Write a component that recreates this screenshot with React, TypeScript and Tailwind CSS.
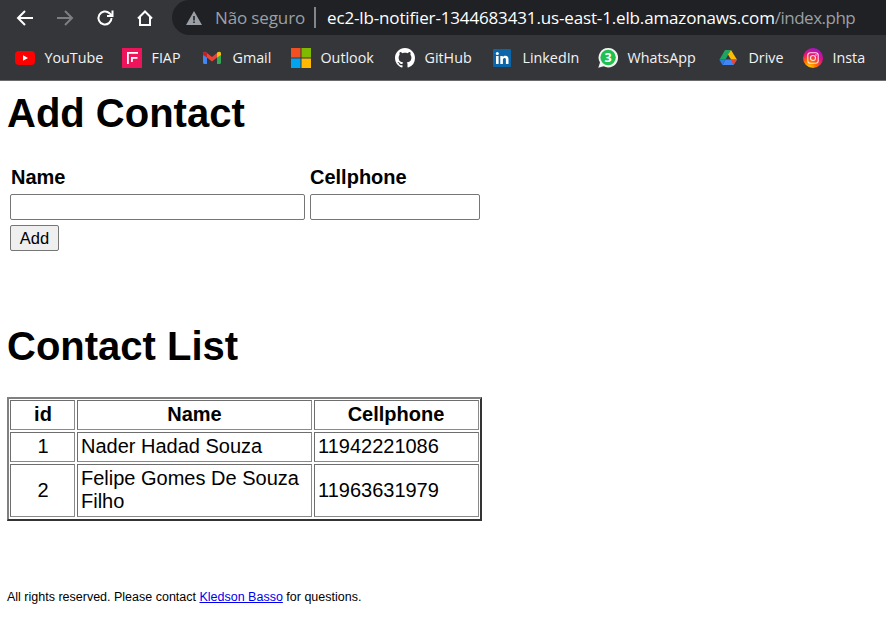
import type { ReactNode } from "react";

const chromeFont = "font-['Open_Sans','Noto_Sans',sans-serif]";

function NavIcon({ children, className }: { children: ReactNode; className?: string }) {
  return (
    <svg width="20" height="20" viewBox="0 0 20 20" fill="none" strokeWidth="2" className={className}>
      {children}
    </svg>
  );
}

function YouTubeIcon() {
  return (
    <svg width="20" height="20" viewBox="0 0 20 20">
      <rect x="0" y="3" width="20" height="14" rx="4" fill="#f00" />
      <path d="M8 7.200 13 10 8 12.800Z" fill="#fff" />
    </svg>
  );
}

function FiapIcon() {
  return (
    <svg width="20" height="20" viewBox="0 0 20 20">
      <rect width="20" height="20" fill="#ed145b" />
      <path d="M5 16V4h11v1.800H6.800V16Z" fill="#fff" />
      <path d="M9 9h6.500v1.800h-4.700V14H9Z" fill="#fff" />
    </svg>
  );
}

function GmailIcon() {
  return (
    <svg width="18" height="20" viewBox="0 0 18 20">
      <path d="M0 5.500C0 3.800 2 3 3.200 4.200L4 5v11H1.200C.5 16 0 15.500 0 14.800Z" fill="#4285f4" />
      <path d="M14 5l.8-.8C16 3 18 3.800 18 5.500v9.300c0 .7-.5 1.200-1.200 1.200H14Z" fill="#34a853" />
      <path d="M4 5l5 4 5-4v4.500l-5 4-5-4Z" fill="#ea4335" />
      <path d="M14 5l.8-.8C16 3 18 3.800 18 5.500V7l-4 2.500Z" fill="#fbbc04" />
      <path d="M0 5.500C0 3.800 2 3 3.200 4.200L4 5v4.500L0 7Z" fill="#c5221f" />
    </svg>
  );
}

function OutlookIcon() {
  return (
    <svg width="20" height="20" viewBox="0 0 20 20">
      <rect width="9.500" height="9.500" fill="#f25022" />
      <rect x="10.500" width="9.500" height="9.500" fill="#7fba00" />
      <rect y="10.500" width="9.500" height="9.500" fill="#00a4ef" />
      <rect x="10.500" y="10.500" width="9.500" height="9.500" fill="#ffb900" />
    </svg>
  );
}

function GitHubIcon() {
  return (
    <svg width="20" height="20" viewBox="0 0 16 16" fill="#fff">
      <path d="M8 0C3.580 0 0 3.580 0 8c0 3.540 2.290 6.530 5.470 7.590.4.070.55-.17.55-.38 0-.19-.01-.82-.01-1.490-2.010.37-2.530-.49-2.690-.94-.09-.23-.48-.94-.82-1.130-.28-.15-.68-.52-.01-.53.63-.01 1.080.58 1.230.82.72 1.210 1.870.87 2.330.66.070-.52.280-.87.510-1.070-1.780-.2-3.640-.89-3.640-3.950 0-.87.310-1.590.820-2.150-.08-.2-.36-1.020.08-2.120 0 0 .67-.21 2.200.82.640-.18 1.320-.27 2-.27s1.360.09 2 .27c1.530-1.040 2.200-.82 2.200-.82.440 1.100.160 1.920.080 2.120.510.560.820 1.270.820 2.150 0 3.070-1.870 3.750-3.650 3.950.290.250.540.730.540 1.480 0 1.070-.01 1.930-.01 2.200 0 .210.150.460.550.380A8.010 8.010 0 0 0 16 8c0-4.420-3.580-8-8-8Z" />
    </svg>
  );
}

function LinkedInIcon() {
  return (
    <svg width="18" height="18" viewBox="0 0 18 18">
      <rect width="18" height="18" rx="1" fill="#0a66a8" />
      <rect x="3" y="7" width="2.600" height="8" fill="#fff" />
      <circle cx="4.300" cy="4.500" r="1.500" fill="#fff" />
      <path d="M7.300 7h2.500v1.200C10.400 7.300 11.300 6.800 12.500 6.800c2.100 0 3 1.300 3 3.500V15h-2.600v-4.200c0-1-.4-1.700-1.300-1.700-1 0-1.700.7-1.700 1.800V15H7.300Z" fill="#fff" />
    </svg>
  );
}

function WhatsAppIcon() {
  return (
    <svg width="20" height="20" viewBox="0 0 20 20">
      <path d="M10 0a9.500 9.500 0 0 0-8 14.500L.3 19.700l5.400-1.500A9.700 9.700 0 1 0 10 0Z" fill="#f2f2f2" />
      <circle cx="10.100" cy="9.500" r="7.700" fill="#1fc04f" />
      <text x="10.100" y="14" textAnchor="middle" fontSize="12.500" fontWeight="700" fill="#fff" fontFamily="'Open Sans', sans-serif">3</text>
    </svg>
  );
}

function DriveIcon() {
  return (
    <svg width="18" height="18" viewBox="0 0 18 18">
      <path d="M6 1h6L6.500 10.500H.5Z" fill="#1ea362" />
      <path d="M12 1l6 9.800h-5.800L9 5.500Z" fill="#fbbc04" />
      <path d="M3.500 16h11l3.500-5.500H6.500Z" fill="#4285f4" />
      <path d="M.2 10.500H6.500L3.500 16Z" fill="#2a7de1" />
      <path d="M12 10.500h6L14.500 16Z" fill="#ea4335" />
    </svg>
  );
}

function InstaIcon() {
  return (
    <svg width="20" height="20" viewBox="0 0 20 20">
      <defs>
        <radialGradient id="insta" cx="0.3" cy="1" r="1.100">
          <stop offset="0" stopColor="#ffd600" />
          <stop offset="0.35" stopColor="#ff6a00" />
          <stop offset="0.65" stopColor="#e5127c" />
          <stop offset="1" stopColor="#9b12d8" />
        </radialGradient>
      </defs>
      <circle cx="10" cy="10" r="10" fill="url(#insta)" />
      <rect x="4.800" y="4.800" width="10.400" height="10.400" rx="2.500" fill="none" stroke="#fff" strokeOpacity="0.85" strokeWidth="1.100" />
      <circle cx="10" cy="10" r="2.500" fill="none" stroke="#fff" strokeOpacity="0.85" strokeWidth="1.100" />
      <circle cx="13" cy="7" r="0.700" fill="#fff" />
    </svg>
  );
}

const bookmarks = [
  { label: "YouTube", icon: <YouTubeIcon />, className: "w-[107px]" },
  { label: "FIAP", icon: <FiapIcon />, className: "w-[81px]" },
  { label: "Gmail", icon: <GmailIcon />, className: "w-[88px]" },
  { label: "Outlook", icon: <OutlookIcon />, className: "w-[104px]" },
  { label: "GitHub", icon: <GitHubIcon />, className: "w-[98px]" },
  { label: "LinkedIn", icon: <LinkedInIcon />, className: "w-[105px]" },
  { label: "WhatsApp", icon: <WhatsAppIcon />, className: "w-[121px]" },
  { label: "Drive", icon: <DriveIcon />, className: "w-[84px]" },
  { label: "Insta", icon: <InstaIcon />, className: "w-[62px]" },
];

function BrowserBar() {
  return (
    <header className={`h-[81px] bg-[#35363a] border-b border-[#6b6b6b] ${chromeFont}`}>
      <div className="flex h-[35px] items-center">
        <div className="flex items-center w-[172px] pl-[15px] gap-5 pt-[1px]">
          <NavIcon className="stroke-white">
            <path d="M18 10H3M10 3l-7 7 7 7" />
          </NavIcon>
          <NavIcon className="stroke-[#7d7e80]">
            <path d="M2 10h15M10 3l7 7-7 7" />
          </NavIcon>
          <NavIcon className="stroke-white">
            <path d="M16.500 10a6.500 6.500 0 1 1-2-4.700L17 7.500" />
            <path d="M17.500 2.500v5.500H12" fill="none" />
          </NavIcon>
          <NavIcon className="stroke-white">
            <path d="M3 10.500 10 3.500l7 7M5 9v8h10V9" />
          </NavIcon>
        </div>
        <div className="flex flex-1 h-full items-center rounded-l-[18px] bg-[#202124] pl-[14px] text-[17px] tracking-[-0.13px]">
          <svg width="16" height="14" viewBox="0 0 16 14" className="mr-[13px]">
            <path d="M8 0 16 14H0ZM7.200 5v4.500h1.600V5Zm0 5.500v1.600h1.600v-1.600Z" fill="#9aa0a6" fillRule="evenodd" />
          </svg>
          <span className="text-[#9aa0a6]">Não seguro</span>
          <span className="mx-[9px] h-[21px] w-[2px] bg-[#80868b]" />
          <span className="text-white whitespace-nowrap ml-[2px] tracking-[-0.15px]">
            ec2-lb-notifier-1344683431.us-east-1.elb.amazonaws.com
            <span className="text-[#9aa0a6] tracking-[-0.5px]">/index.php</span>
          </span>
        </div>
      </div>
      <nav className="flex h-[45px] items-center pl-[15px]">
        {bookmarks.map((b) => (
          <div key={b.label} className={`flex shrink-0 items-center gap-[9.500px] text-[14.300px] text-[#f1f3f4] ${b.className}`}>
            <span className="flex w-5 justify-start">{b.icon}</span>
            <span>{b.label}</span>
          </div>
        ))}
      </nav>
    </header>
  );
}

const contacts = [
  { id: 1, name: "Nader Hadad Souza", phone: "11942221086" },
  { id: 2, name: "Felipe Gomes De Souza Filho", phone: "11963631979" },
];

const cellBorder = "border border-t-[#6e6e6e] border-l-[#6e6e6e] border-r-[#8a8a8a] border-b-[#8a8a8a]";

export default function App() {
  return (
    <div className="min-h-[626px] bg-white font-['Liberation_Sans',Arial,sans-serif] text-black">
      <BrowserBar />
      <main className="pl-[7px]">
        <h1 className="pt-[9px] text-[40px] font-bold leading-[46px]">Add Contact</h1>

        <table className="mt-[30px] border-separate border-spacing-0 text-[20px]">
          <thead>
            <tr>
              <th className="pl-[4px] text-left font-bold leading-[23px] pb-[5px]">Name</th>
              <th className="pl-[5px] text-left font-bold leading-[23px] pb-[5px]">Cellphone</th>
            </tr>
          </thead>
          <tbody>
            <tr>
              <td className="pl-[3px]">
                <input type="text" className="block h-[26px] w-[295px] rounded-[2px] border border-[#767676] bg-white" />
              </td>
              <td className="pl-[5px]">
                <input type="text" className="block h-[26px] w-[170px] rounded-[2px] border border-[#767676] bg-white" />
              </td>
            </tr>
            <tr>
              <td className="pl-[3px] pt-[5px]" colSpan={2}>
                <button type="button" className="block h-[26px] w-[49px] rounded-[2px] border border-[#767676] bg-[#efefef] text-[16.500px]">
                  Add
                </button>
              </td>
            </tr>
          </tbody>
        </table>

        <h1 className="mt-[72px] text-[40px] font-bold leading-[46px]">Contact List</h1>

        <table className="mt-[28px] w-[475px] table-fixed border-separate border-spacing-[2px] border border-b-[2px] border-t-[#808080] border-l-[#808080] border-r-[#333] border-b-[#333] shadow-[inset_1px_1px_0_#808080,inset_-1px_0_0_#333] text-[20px] leading-[23px]">
          <colgroup>
            <col className="w-[65px]" />
            <col className="w-[235px]" />
            <col />
          </colgroup>
          <thead>
            <tr>
              <th className={`h-[30px] pl-[1px] pb-[1px] pt-0 pr-0 font-bold ${cellBorder}`}>id</th>
              <th className={`h-[30px] pb-[1px] pt-0 px-0 font-bold ${cellBorder}`}>Name</th>
              <th className={`h-[30px] pb-[1px] pt-0 pr-[1px] pl-0 font-bold ${cellBorder}`}>Cellphone</th>
            </tr>
          </thead>
          <tbody>
            {contacts.map((c) => (
              <tr key={c.id}>
                <td className={`h-[30px] pl-[1px] pb-[1px] pt-0 pr-0 text-center ${cellBorder}`}>{c.id}</td>
                <td className={`px-[3px] pt-[2px] pb-[3px] ${cellBorder}`}>{c.name}</td>
                <td className={`px-[3px] pt-[2px] pb-[3px] ${cellBorder}`}>{c.phone}</td>
              </tr>
            ))}
          </tbody>
        </table>

        <p className="mt-[69px] text-[12.500px] leading-[14px]">
          All rights reserved. Please contact{" "}
          <a href="#" className="text-[#0000ee] underline">Kledson Basso</a> for questions.
        </p>
      </main>
    </div>
  );
}
